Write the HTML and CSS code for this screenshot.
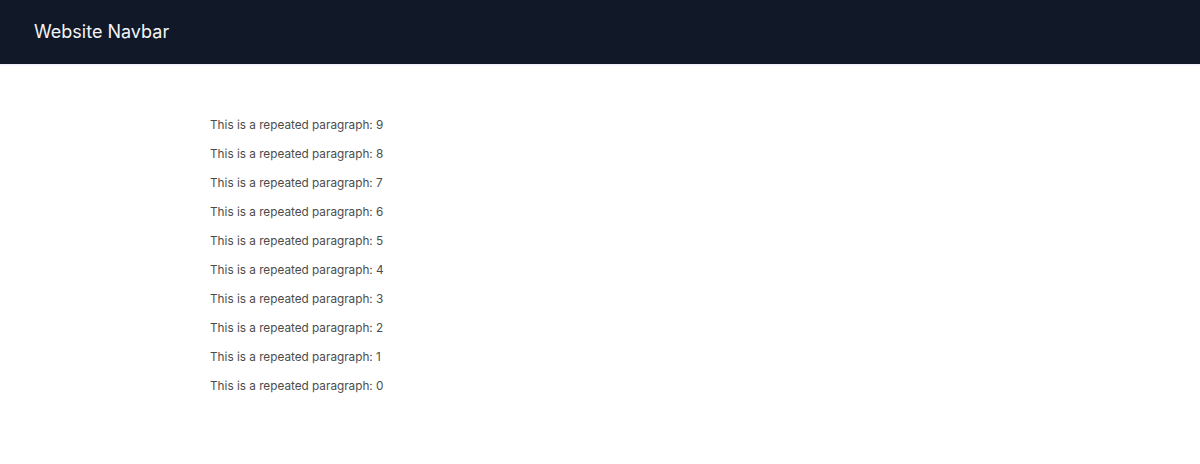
FILE: index.html
```html
<!DOCTYPE html>
<html lang="en">
<head>
    <meta charset="UTF-8">
    <meta name="viewport" content="width=device-width, initial-scale=1.0">
    <title>Website Navbar</title>
    <link rel="stylesheet" href="styles.css">
</head>
<body>
    <nav class="navbar">
        <span class="brand">Website Navbar</span>
    </nav>
    <main class="content">
        <p>This is a repeated paragraph: 9</p>
        <p>This is a repeated paragraph: 8</p>
        <p>This is a repeated paragraph: 7</p>
        <p>This is a repeated paragraph: 6</p>
        <p>This is a repeated paragraph: 5</p>
        <p>This is a repeated paragraph: 4</p>
        <p>This is a repeated paragraph: 3</p>
        <p>This is a repeated paragraph: 2</p>
        <p>This is a repeated paragraph: 1</p>
        <p>This is a repeated paragraph: 0</p>
    </main>
</body>
</html>
```

FILE: styles.css
```css
body {
    margin: 0;
    font-family: Inter, "Liberation Sans", sans-serif;
    background-color: #fff;
    color: #4b4b4b;
}
.navbar {
    height: 64px;
    display: flex;
    align-items: center;
    padding: 0 34px 2px;
    box-sizing: border-box;
    background-color: #111827;
    box-shadow: 0 1px 2px rgba(99, 102, 241, 0.15);
}
.brand {
    color: #f3f4f6;
    font-size: 18px;
}
.content {
    max-width: 780px;
    margin: 0 auto;
    padding-top: 47px;
}
.content p {
    margin: 0;
    font-size: 11.75px;
    line-height: 29px;
}
```
